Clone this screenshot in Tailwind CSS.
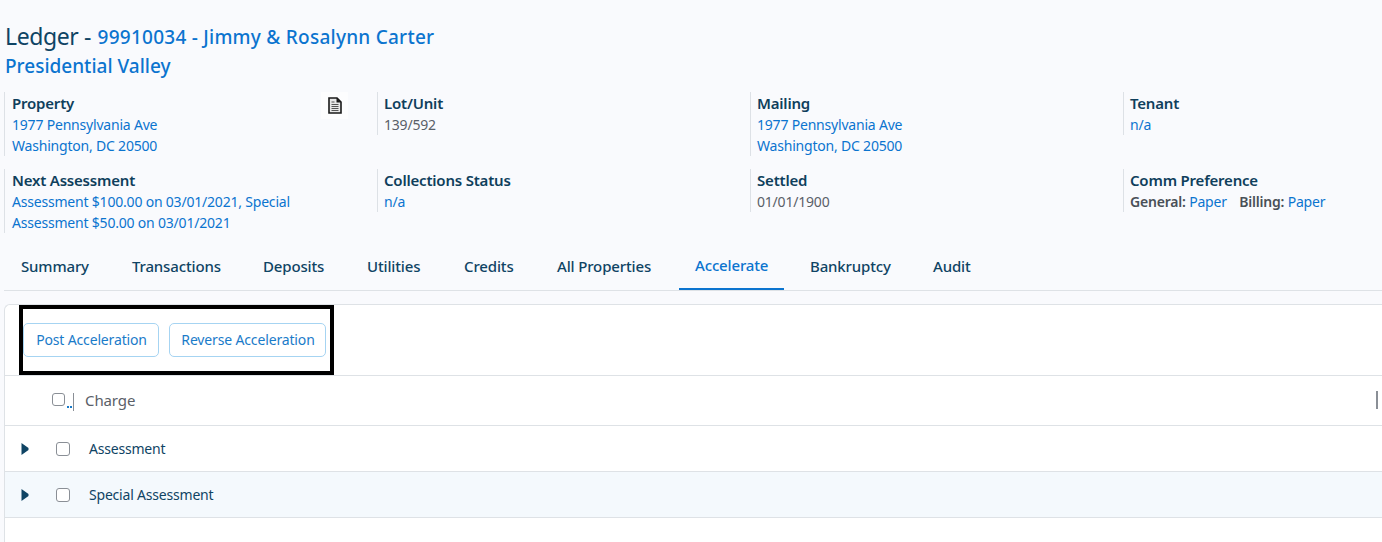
<!DOCTYPE html>
<html lang="en">
<head>
    <meta charset="UTF-8">
    <title>Ledger</title>
    <script src="https://cdn.jsdelivr.net/npm/@tailwindcss/browser@4"></script>
</head>
<body class="bg-[#f9fafd] font-['Noto_Sans',sans-serif] text-[14px] text-[#495057] h-[542px] w-[1382px] overflow-hidden">
    <!-- Title -->
    <div class="h-[92px] pt-[21px] pl-[5px]">
        <h1 class="h-[31px] leading-[31px] text-[23px] text-[#0f4464] tracking-[-0.4px]">Ledger - <span class="ml-[1px] align-[1px] text-[19px] font-medium text-[#0b74cf] tracking-[0.25px]">99910034 - Jimmy &amp; Rosalynn Carter</span></h1>
        <h2 class="h-[28px] leading-[28px] text-[19px] font-medium text-[#0b74cf]">Presidential Valley</h2>
    </div>

    <!-- Info grid -->
    <div class="grid grid-cols-[373px_373px_373px_259px] pl-[4px] gap-y-[13px] text-[14px] leading-[21px] tracking-[-0.2px]">
        <div class="relative h-[64px] border-l border-[#dde1e6] pl-[7px] pt-px">
            <div class="font-semibold text-[15px] text-[#0f3f5c]">Property</div>
            <a class="block text-[#0b74cf]">1977 Pennsylvania Ave</a>
            <a class="block text-[#0b74cf]">Washington, DC 20500</a>
            <span class="absolute left-[316px] top-0 w-[27px] h-[27px] bg-[#fdfdfe] flex items-center justify-center">
                <svg width="14" height="17" viewBox="0 0 14 17">
                    <path d="M1 1h8l4 4v11H1z" fill="#e8e8e8" stroke="#1a1a1a" stroke-width="1.6"/>
                    <path d="M8.5 1v4.5H13z" fill="#1a1a1a"/>
                    <path d="M3.5 5h3M3.5 7.5h7M3.5 9.5h7M3.5 11.5h7M3.5 13.5h7" stroke="#555" stroke-width="1"/>
                </svg>
            </span>
        </div>
        <div class="h-[43px] border-l border-[#dde1e6] pl-[6px] pt-px">
            <div class="font-semibold text-[15px] text-[#0f3f5c]">Lot/Unit</div>
            <div class="text-[#5a6068]">139/592</div>
        </div>
        <div class="h-[64px] border-l border-[#dde1e6] pl-[6px] pt-px">
            <div class="font-semibold text-[15px] text-[#0f3f5c]">Mailing</div>
            <a class="block text-[#0b74cf]">1977 Pennsylvania Ave</a>
            <a class="block text-[#0b74cf]">Washington, DC 20500</a>
        </div>
        <div class="h-[43px] border-l border-[#dde1e6] pl-[6px] pt-px">
            <div class="font-semibold text-[15px] text-[#0f3f5c]">Tenant</div>
            <a class="block text-[#0b74cf]">n/a</a>
        </div>

        <div class="h-[64px] border-l border-[#dde1e6] pl-[7px] pt-px">
            <div class="font-semibold text-[15px] text-[#0f3f5c]">Next Assessment</div>
            <a class="block w-[300px] text-[#0b74cf]">Assessment $100.00 on 03/01/2021, Special Assessment $50.00 on 03/01/2021</a>
        </div>
        <div class="h-[43px] border-l border-[#dde1e6] pl-[6px] pt-px">
            <div class="font-semibold text-[15px] text-[#0f3f5c]">Collections Status</div>
            <a class="block text-[#0b74cf]">n/a</a>
        </div>
        <div class="h-[43px] border-l border-[#dde1e6] pl-[6px] pt-px">
            <div class="font-semibold text-[15px] text-[#0f3f5c]">Settled</div>
            <div class="text-[#5a6068]">01/01/1900</div>
        </div>
        <div class="h-[43px] border-l border-[#dde1e6] pl-[6px] pt-px">
            <div class="font-semibold text-[15px] text-[#0f3f5c]">Comm Preference</div>
            <div class="text-[#0b74cf]"><b class="font-semibold text-[#495057]">General:</b> Paper <b class="ml-[9px] font-semibold text-[#495057]">Billing:</b> Paper</div>
        </div>
    </div>

    <!-- Tabs -->
    <div class="mt-[11px] ml-[4px] pl-px h-[47px] flex border-b border-[#dee2e6] font-medium text-[15px] tracking-[-0.15px] text-[#0f4464]">
        <a class="w-[111px] pl-[16px] pt-[11px]">Summary</a>
        <a class="w-[131px] pl-[16px] pt-[11px]">Transactions</a>
        <a class="w-[104px] pl-[16px] pt-[11px]">Deposits</a>
        <a class="w-[97px] pl-[16px] pt-[11px]">Utilities</a>
        <a class="w-[93px] pl-[16px] pt-[11px]">Credits</a>
        <a class="w-[138px] pl-[16px] pt-[11px]">All Properties</a>
        <a class="w-[105px] h-[46px] mr-[10px] pl-[16px] pt-[10px] text-[#0b74cf] border-b-2 border-[#0b74cf]">Accelerate</a>
        <a class="w-[123px] pl-[16px] pt-[11px]">Bankruptcy</a>
        <a class="pl-[16px] pt-[11px]">Audit</a>
    </div>

    <!-- Panel -->
    <div class="relative mt-[13px] ml-[4px] bg-white border-t border-l border-[#dee2e6] rounded-tl-[6px] h-[240px] text-[14px]">
        <div class="h-[71px] border-b border-[#dee2e6] pl-[18px] pt-[18px] flex gap-[10px] items-start">
            <button class="h-[34px] w-[136px] pb-[2px] pl-px rounded-[5px] border border-[#a6d4f2] text-[#1a7bc9] tracking-[-0.15px]">Post Acceleration</button>
            <button class="h-[34px] w-[157px] pb-[2px] pl-px rounded-[5px] border border-[#a6d4f2] text-[#1a7bc9] tracking-[-0.15px]">Reverse Acceleration</button>
        </div>
        <!-- annotation box drawn over the toolbar -->
        <div class="absolute left-[14px] top-0 w-[315px] h-[70px] border-4 border-black"></div>

        <div class="relative h-[50px] border-b border-[#dee2e6] flex items-center text-[#5a6068]">
            <span class="ml-[47px] w-[13px] h-[13px] border border-[#8a8f96] rounded-[3px] -mt-[3px]"></span>
            <span class="w-[2px] h-[2px] ml-[2px] mt-[12px] bg-[#1a7bc9]"></span>
            <span class="w-[2px] h-[2px] ml-[1px] mt-[12px] bg-[#1a7bc9]"></span>
            <span class="w-px h-[18px] ml-[1px] bg-[#8a8f96] mt-[2px]"></span>
            <span class="ml-[11px] text-[15px] tracking-[-0.1px]">Charge</span>
            <span class="absolute left-[1371px] top-[15px] w-[2px] h-[18px] bg-[#8a8f96]"></span>
        </div>
        <div class="h-[46px] border-b border-[#dee2e6] flex items-center text-[#0f4464] tracking-[-0.2px]">
            <svg class="ml-[16px]" width="8" height="12" viewBox="0 0 8 12"><path d="M0.5 0l7 5v2l-7 5z" fill="#0f4464"/></svg>
            <span class="ml-[27px] w-[14px] h-[14px] border border-[#8a8f96] rounded-[3px]"></span>
            <span class="ml-[19px]">Assessment</span>
        </div>
        <div class="h-[46px] border-b border-[#dee2e6] bg-[#f4f9fd] flex items-center text-[#0f4464] tracking-[-0.2px]">
            <svg class="ml-[16px]" width="8" height="12" viewBox="0 0 8 12"><path d="M0.5 0l7 5v2l-7 5z" fill="#0f4464"/></svg>
            <span class="ml-[27px] w-[14px] h-[14px] border border-[#8a8f96] rounded-[3px] bg-white"></span>
            <span class="ml-[19px]">Special Assessment</span>
        </div>
    </div>
</body>
</html>
